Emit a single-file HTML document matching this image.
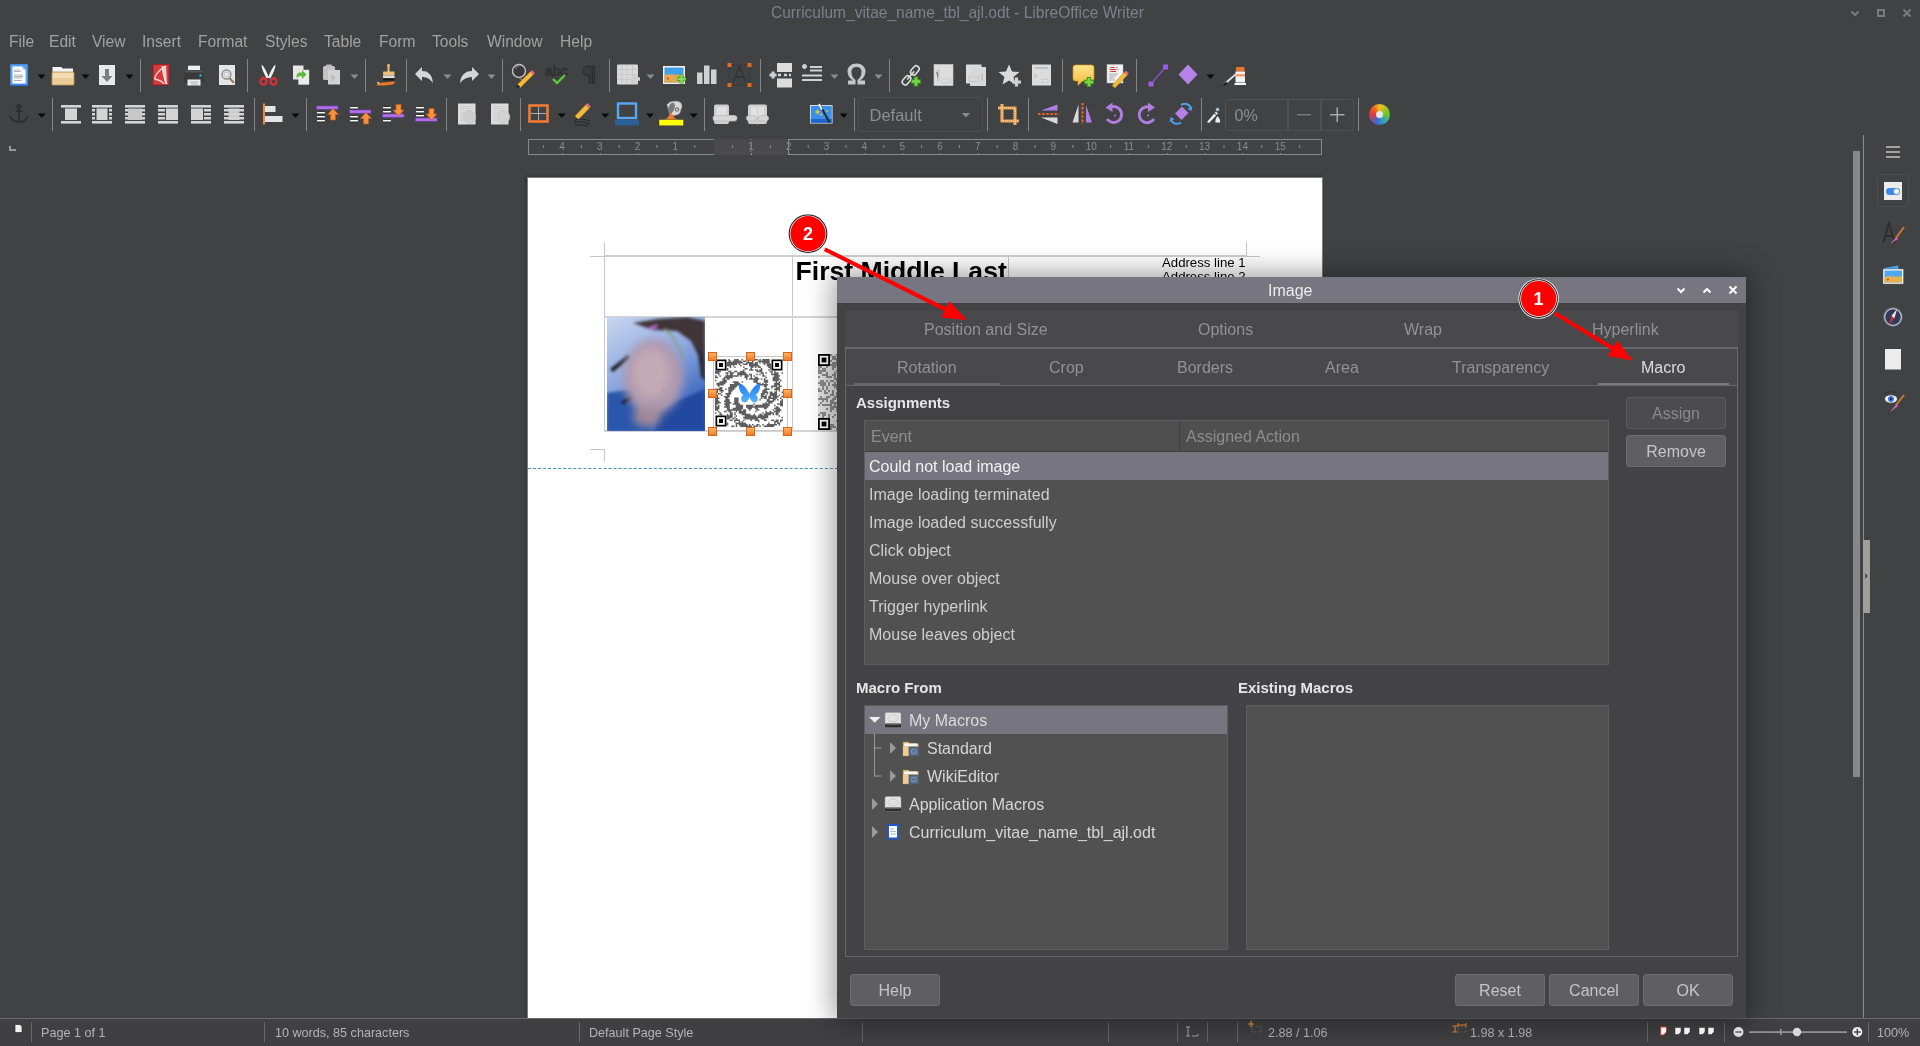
<!DOCTYPE html>
<html><head><meta charset="utf-8">
<style>
*{margin:0;padding:0;box-sizing:border-box}
html,body{width:1920px;height:1046px;overflow:hidden;background:#414244;font-family:"Liberation Sans",sans-serif;position:relative}
.a{position:absolute}
.t{position:absolute;white-space:nowrap;line-height:1}
.menu{color:#a3a2a0;font-size:15.6px;top:34px}
.sep{position:absolute;width:1px;background:#6b6b6d}
.dd{position:absolute;width:0;height:0;border-left:5px solid transparent;border-right:5px solid transparent;border-top:5px solid #111}
.dd.g{border-top-color:#8a8a8a}
.sb{position:absolute;top:1022px;height:20px;width:1px;background:#68686a}
.st{position:absolute;top:1027px;font-size:12.6px;color:#b4b4b4;white-space:nowrap;line-height:1}
.tab{position:absolute;font-size:16px;color:#929292;white-space:nowrap;line-height:1}
.row{position:absolute;left:869px;font-size:16px;color:#cecece;white-space:nowrap;line-height:1}
.btn{position:absolute;background:#5f5f61;border:1px solid #6d6d6f;border-radius:3px;color:#c6c6c6;font-size:16px;text-align:center;line-height:32px}
.lbl{position:absolute;font-size:15px;font-weight:bold;color:#e6e6e6;white-space:nowrap;line-height:1}
</style></head>
<body><div id="root" style="position:absolute;left:0;top:0;width:1920px;height:1046px;will-change:transform">
<!-- title -->
<div class="t" style="left:771px;top:4.5px;font-size:16.6px;color:#7d8087;transform:scaleX(0.935);transform-origin:0 0">Curriculum_vitae_name_tbl_ajl.odt - LibreOffice Writer</div>
<!-- menu -->
<div class="t menu" style="left:9px">File</div>
<div class="t menu" style="left:49px">Edit</div>
<div class="t menu" style="left:92px">View</div>
<div class="t menu" style="left:142px">Insert</div>
<div class="t menu" style="left:198px">Format</div>
<div class="t menu" style="left:265px">Styles</div>
<div class="t menu" style="left:324px">Table</div>
<div class="t menu" style="left:379px">Form</div>
<div class="t menu" style="left:432px">Tools</div>
<div class="t menu" style="left:487px">Window</div>
<div class="t menu" style="left:560px">Help</div>

<!-- toolbar --><svg class="a" style="left:0;top:0" width="1400" height="136"><rect x="10" y="64" width="18" height="22" fill="#2f6fd0"/><rect x="10.5" y="64.5" width="17" height="20" fill="#5aa2f0"/><path d="M12.5 66.5h9.5l3.5 3.5v13.5h-13z" fill="#fff"/><path d="M22 66.5v3.5h3.5" fill="#cfe0f5"/><path d="M14 70h6M14 71.5h7M14 75h9M14 76.5h9M14 78h8M14 80.5h8" stroke="#9aa0a8" stroke-width="0.8"/><path d="M37.5 74.5h8l-4 4.5z" fill="#0a0a0a"/><path d="M52.5 67h9l1 1.5h10.5v5h-20.5z" fill="#f4f4f4"/><rect x="52" y="72" width="22" height="13" rx="1" fill="#e9cc98" stroke="#c09a58" stroke-width="0.8"/><rect x="53" y="73" width="20" height="5" fill="#f3ddb2"/><path d="M81.5 74.5h8l-4 4.5z" fill="#0a0a0a"/><rect x="99" y="65" width="16" height="20" fill="#e9e9e9"/><path d="M105 69h4v7h3.5l-5.5 6l-5.5-6h3.5z" fill="#7a7d84"/><path d="M125.5 74.5h8l-4 4.5z" fill="#0a0a0a"/><rect x="140" y="59" width="1" height="33" fill="#858585"/><rect x="153" y="64.5" width="16" height="20.5" fill="#d73a3b" stroke="#9e1e1e" stroke-width="0.8"/><path d="M166 66 C158 70 155 76 154.5 79 M162 66 C163 74 164 80 167 84 M154.5 79 C159 80 163 82 164 84" stroke="#f6d6d6" stroke-width="1.3" fill="none"/><path d="M162.5 66.5l3.5 0l1 17.5l-2 0z" fill="#f2f2f2" opacity="0.8"/><rect x="188" y="65.7" width="12" height="6" fill="#f0f0f0"/><rect x="184" y="70" width="20" height="12.5" rx="2" fill="#3a3a3a"/><rect x="185" y="70.5" width="18" height="2" fill="#555"/><rect x="199.5" y="74.5" width="2" height="2" fill="#22c8f0"/><rect x="187.5" y="79.5" width="13" height="6" fill="#eeeeee"/><path d="M189.5 82h9M191 84h7" stroke="#999" stroke-width="0.7"/><rect x="219" y="65" width="16" height="20" fill="#e6e6e6"/><circle cx="226.5" cy="74.5" r="4.5" fill="none" stroke="#8d8d8d" stroke-width="1.3"/><circle cx="226.5" cy="74.5" r="2.6" fill="none" stroke="#b0b0b0" stroke-width="0.7"/><path d="M229.5 78l4.5 5" stroke="#9c7c5c" stroke-width="2"/><rect x="247" y="59" width="1" height="33" fill="#858585"/><path d="M261.5 64.5 C263.5 66 266 70 268.8 77.5 L266.8 78.5 C263.5 73 261.5 68 261.5 64.5Z" fill="#f2f2f2"/><path d="M275.5 64.5 C273.5 66 271 70 268.2 77.5 L270.2 78.5 C273.5 73 275.5 68 275.5 64.5Z" fill="#f2f2f2"/><path d="M260.5 81.5 a3 3.2 0 1 0 6 0 a3 3.2 0 1 0 -6 0z M270.5 81.5 a3 3.2 0 1 0 6 0 a3 3.2 0 1 0 -6 0z" fill="none" stroke="#d8303a" stroke-width="2.4"/><rect x="293" y="65.5" width="10.5" height="14" fill="#e8e8e8"/><rect x="298.5" y="70" width="10.5" height="14.5" fill="#ececec" stroke="#d0d0d0" stroke-width="0.5"/><path d="M296.5 78 C296 73 299 72 302 72.5 v-2.5 l4.5 4.5 l-4.5 4.5 v-2.5 C300 76 298 76 296.5 78z" fill="#5cba3a"/><rect x="323" y="66" width="12" height="14" rx="1.5" fill="#c4c4c4"/><rect x="326" y="64.5" width="6" height="3" rx="1" fill="#bdbdbd"/><rect x="328" y="70" width="12" height="14.5" fill="#d2d2d2"/><path d="M331 74 l5 4 l-5 4z" fill="#c0c0c0"/><path d="M350.5 74.5h8l-4 4.5z" fill="#8c8c8c"/><rect x="365" y="59" width="1" height="33" fill="#858585"/><rect x="387.5" y="65" width="2" height="7" fill="#e8c078"/><circle cx="388.5" cy="65.5" r="1.4" fill="#e8c078"/><rect x="383" y="71.5" width="11.5" height="4" rx="1" fill="#e8c078"/><rect x="383" y="75.5" width="11.5" height="2.5" fill="#dedede"/><rect x="383" y="78.5" width="11.5" height="2" fill="#1a1a1a"/><path d="M376 85 C380 82 386 82.5 395 81.5 L394 84 C388 85.5 380 86 376 85z" fill="#f07820"/><rect x="377.5" y="82" width="1.6" height="1.6" fill="#fff"/><rect x="406" y="59" width="1" height="33" fill="#858585"/><path d="M415 74 L422 67 V71 C428 71 432 74 433 83 C430 79 427 77 422 77 V81 Z" fill="#d6d6d6"/><path d="M443.5 74.5h8l-4 4.5z" fill="#8c8c8c"/><path d="M479 74 L472 67 V71 C466 71 461 74 460 83 C463 79 467 77 472 77 V81 Z" fill="#d6d6d6"/><path d="M487.5 74.5h8l-4 4.5z" fill="#8c8c8c"/><rect x="502" y="59" width="1" height="33" fill="#858585"/><circle cx="519" cy="71" r="6.5" fill="#3a3a3c" stroke="#c4c4c4" stroke-width="1.4"/><path d="M515.5 69 a4 4 0 0 1 4-3" stroke="#6a6a6a" stroke-width="1.2" fill="none"/><path d="M525 83 L520.5 78.5" stroke="#8c6a4c" stroke-width="2.4"/><path d="M517.5 84.5 L530.5 71.5 L533.5 74.5 L520.5 87.5 Z" fill="#f2b93a" stroke="#b07a20" stroke-width="0.6"/><path d="M530.5 71.5 L532 70 L535 73 L533.5 74.5Z" fill="#e8608a"/><path d="M517.5 84.5 L516 88 L520 86.5Z" fill="#222"/><text x="545" y="76" font-family="Liberation Sans" font-size="14" font-weight="bold" fill="#383838" stroke="#2a2a2a" stroke-width="0.4" letter-spacing="-0.5">abc</text><path d="M553 79 L557 83 L565 75" stroke="#5cc83a" stroke-width="2.4" fill="none"/><path d="M589 66 H594.5 V83.5 H592.5 V68 H591 V83.5 H589 V76 C585 76 583 74 583 71 C583 68 585 66 589 66Z" fill="#3a3a3a" stroke="#222" stroke-width="0.6"/><rect x="609" y="59" width="1" height="33" fill="#858585"/><rect x="617" y="64.5" width="21" height="20" rx="1" fill="#d9d9d9"/><path d="M622 64.5v20M627 64.5v20M632.5 64.5v20M617 69.5h21M617 74.5h21M617 79.5h21" stroke="#c2c2c2" stroke-width="0.7"/><path d="M630 79h10M635 74v10" stroke="#cfcfcf" stroke-width="3.5"/><path d="M646.5 74.5h8l-4 4.5z" fill="#8c8c8c"/><rect x="663" y="66" width="22" height="18" fill="#f2f2f2"/><rect x="664.5" y="67.5" width="19" height="15" fill="#3ea0e8"/><path d="M664.5 75 C670 73 676 76 683.5 74 V82.5 H664.5Z" fill="#e4a850"/><path d="M668 77l1 1.5l-1 1.5l-1-1.5z" fill="#e83020"/><path d="M677 79h9M681.5 74.5v9" stroke="#4caa2a" stroke-width="4"/><path d="M677.5 79h8M681.5 75v8" stroke="#8ad860" stroke-width="2.2"/><rect x="697" y="72.5" width="5.5" height="11.5" fill="#d0d0d0"/><rect x="704" y="65.5" width="5.5" height="18.5" fill="#d0d0d0"/><rect x="711" y="69.5" width="5.5" height="14.5" fill="#d0d0d0"/><rect x="729.5" y="65" width="20" height="20" fill="none" stroke="#2a2a2a" stroke-width="0.6" stroke-dasharray="1.5 1.5"/><path d="M733 82 L739.5 67 L746 82 M735 77 H744" stroke="#333" stroke-width="1.6" fill="none"/><rect x="727.5" y="63" width="4" height="4" fill="#e06a20"/><rect x="747.5" y="63" width="4" height="4" fill="#e06a20"/><rect x="727.5" y="83" width="4" height="4" fill="#e06a20"/><rect x="747.5" y="83" width="4" height="4" fill="#e06a20"/><rect x="760" y="59" width="1" height="33" fill="#858585"/><rect x="777" y="63" width="15" height="9" fill="#dcdcdc"/><rect x="777" y="78.5" width="15" height="9" fill="#dcdcdc"/><path d="M778 75h3M784 75h3M789 75h2" stroke="#d4d4d4" stroke-width="2.5"/><path d="M769.5 75h7M773 71.5v7" stroke="#d0d0d0" stroke-width="3"/><path d="M802 66.5h5M804.5 64v5" stroke="#d0d0d0" stroke-width="2.5"/><path d="M810 67h12M810 70.5h12M802 75.5h20M802 80h20" stroke="#d0d0d0" stroke-width="2.2"/><path d="M830.5 74.5h8l-4 4.5z" fill="#8c8c8c"/><path d="M848 84.5 V80.5 H853 C849.5 78.5 847.5 75 847.5 71.5 C847.5 66.5 851.5 63.5 856.5 63.5 C861.5 63.5 865.5 66.5 865.5 71.5 C865.5 75 863.5 78.5 860 80.5 H865 V84.5 H857.5 V80 C860 78.5 861.5 75.5 861.5 72 C861.5 68.5 859.5 67 856.5 67 C853.5 67 851.5 68.5 851.5 72 C851.5 75.5 853 78.5 855.5 80 V84.5Z" fill="#c6c6c6"/><path d="M874.5 74.5h8l-4 4.5z" fill="#8c8c8c"/><rect x="889" y="59" width="1" height="33" fill="#858585"/><g transform="rotate(-50 911 75)"><rect x="899" y="72" width="10" height="6" rx="3" fill="none" stroke="#dcdcdc" stroke-width="1.6"/><rect x="912" y="72" width="10" height="6" rx="3" fill="none" stroke="#dcdcdc" stroke-width="1.6"/><path d="M905 75h11" stroke="#dcdcdc" stroke-width="1.6"/></g><path d="M911 81.5h10M916 76.5v10" stroke="#3c9a20" stroke-width="4.5"/><path d="M912 81.5h8M916 77.5v8" stroke="#7ad648" stroke-width="2.5"/><rect x="934" y="64.5" width="19" height="21" fill="#dcdcdc" stroke="#cfcfcf" stroke-width="0.6"/><path d="M936.5 72l2-1.5v11" stroke="#c6c6c6" stroke-width="2"/><rect x="942" y="79" width="9" height="4" fill="none" stroke="#c6c6c6" stroke-width="0.8"/><rect x="966" y="64.5" width="15.5" height="19" fill="#dcdcdc"/><rect x="970" y="67" width="16" height="19" fill="#d8d8d8"/><rect x="969" y="77" width="10" height="4.5" fill="none" stroke="#c4c4c4" stroke-width="0.8"/><rect x="981" y="74" width="2" height="7" fill="#c4c4c4"/><path d="M1009 64.5 L1012 71.5 L1019.5 72 L1013.5 77 L1015.5 84.5 L1009 80.5 L1002.5 84.5 L1004.5 77 L998.5 72 L1006 71.5Z" fill="#dadada"/><path d="M1012 82h9M1016.5 77.5v9" stroke="#d2d2d2" stroke-width="3.2"/><rect x="1032" y="64.5" width="19" height="21" fill="#dcdcdc"/><rect x="1035" y="67" width="13" height="1.8" fill="#bdbdbd"/><rect x="1042" y="79.5" width="6" height="3" fill="none" stroke="#c4c4c4" stroke-width="0.7"/><path d="M1034 73l4 3l-4 3" fill="#c8c8c8"/><rect x="1062" y="59" width="1" height="33" fill="#858585"/><defs><linearGradient id="cmg" x1="0" y1="0" x2="0" y2="1"><stop offset="0" stop-color="#fde48a"/><stop offset="1" stop-color="#f2bc3a"/></linearGradient></defs><path d="M1073 67.5 a2.5 2.5 0 0 1 2.5-2.5 h16 a2.5 2.5 0 0 1 2.5 2.5 v11 a2.5 2.5 0 0 1 -2.5 2.5 h-9 l-4.5 4.5 v-4.5 h-2.5 a2.5 2.5 0 0 1 -2.5-2.5z" fill="url(#cmg)" stroke="#d8901c" stroke-width="0.7"/><path d="M1084 82h10M1089 77v10" stroke="#3c9a20" stroke-width="4.5"/><path d="M1085 82h8M1089 78v8" stroke="#7ad648" stroke-width="2.5"/><rect x="1107" y="64.5" width="16" height="18.5" fill="#f2f2f2" stroke="#bbb" stroke-width="0.5"/><path d="M1109 67.5h9M1109 69.5h10M1109 71.5h7M1109 74h9M1109 76h7M1109 78h5M1109 80h6" stroke="#9a9a9a" stroke-width="0.8"/><path d="M1111 67.5h3M1110 69.5h4M1114 69.5h1.5M1111 71.5h5" stroke="#d82828" stroke-width="1"/><path d="M1112 85.5 L1124.5 72 L1127.5 75 L1115 88Z" fill="#f2b93a" stroke="#b07a20" stroke-width="0.5"/><path d="M1124.5 72 L1126 70.5 L1129 73.5 L1127.5 75Z" fill="#e8608a"/><rect x="1136" y="59" width="1" height="33" fill="#858585"/><path d="M1151 84 L1165.5 67" stroke="#8a4ed0" stroke-width="1.3"/><rect x="1148.5" y="81.5" width="5" height="5" fill="#9a5ee0"/><rect x="1163" y="64.5" width="5" height="5" fill="#9a5ee0"/><path d="M1188 64.5 L1197.5 74.5 L1188 84.5 L1178.5 74.5Z" fill="#b684e8"/><path d="M1206.5 74.5h8l-4 4.5z" fill="#0a0a0a"/><rect x="1236" y="67" width="8.5" height="4.5" rx="1" fill="#e87830"/><rect x="1235.5" y="71.5" width="9.5" height="11" fill="#f2f2f2"/><rect x="1235.5" y="74" width="9.5" height="2.5" fill="#f0a070"/><rect x="1234.5" y="83" width="11.5" height="2" fill="#f8f8f8"/><path d="M1224 84.5 L1236 74" stroke="#ddd" stroke-width="1.8"/><path d="M1223.5 85 L1227 82.5" stroke="#111" stroke-width="2"/><g stroke="#2e2e2e" stroke-width="1.8" fill="none"><circle cx="19" cy="106.5" r="1.6"/><path d="M19 108v14M15.5 111h7M10 116 C12 121 16 122 19 122 C22 122 26 121 28 116"/></g><path d="M37.7 113.5h8l-4 4.5z" fill="#0a0a0a"/><rect x="52" y="98" width="1" height="33" fill="#858585"/><g fill="#d4d4d4"><rect x="61" y="105" width="20" height="2.6"/><rect x="61" y="121" width="20" height="2.6"/><rect x="65" y="108.5" width="12" height="11.5"/></g><g fill="#d4d4d4"><rect x="92" y="105" width="20" height="2.6"/><rect x="92" y="121" width="20" height="2.6"/><rect x="96.5" y="108.5" width="11" height="11.5"/><rect x="92" y="109" width="3" height="2.5"/><rect x="109" y="109" width="3" height="2.5"/><rect x="92" y="113" width="3" height="2.5"/><rect x="109" y="113" width="3" height="2.5"/><rect x="92" y="117" width="3" height="2.5"/><rect x="109" y="117" width="3" height="2.5"/></g><g fill="#d4d4d4"><rect x="125" y="105" width="20" height="2.6"/><rect x="125" y="121" width="20" height="2.6"/><rect x="128" y="108.5" width="14" height="11.5" fill="#c8c8c8"/><rect x="125" y="109" width="3" height="2.5"/><rect x="142" y="109" width="3" height="2.5"/><rect x="125" y="113" width="3" height="2.5"/><rect x="142" y="113" width="3" height="2.5"/><rect x="125" y="117" width="3" height="2.5"/><rect x="142" y="117" width="3" height="2.5"/></g><g fill="#d4d4d4"><rect x="158" y="105" width="20" height="2.6"/><rect x="158" y="121" width="20" height="2.6"/><rect x="166" y="108.5" width="12" height="11.5"/><rect x="158" y="109" width="7" height="2.5"/><rect x="158" y="113" width="7" height="2.5"/><rect x="158" y="117" width="7" height="2.5"/></g><g fill="#d4d4d4"><rect x="191" y="105" width="20" height="2.6"/><rect x="191" y="121" width="20" height="2.6"/><rect x="191" y="108.5" width="12" height="11.5"/><rect x="204" y="109" width="7" height="2.5"/><rect x="204" y="113" width="7" height="2.5"/><rect x="204" y="117" width="7" height="2.5"/></g><g fill="#d4d4d4"><rect x="224" y="105" width="20" height="2.6"/><rect x="224" y="121" width="20" height="2.6"/><rect x="228.5" y="108.5" width="11" height="11.5" fill="#c8c8c8"/><rect x="224" y="109" width="20" height="2.5"/><rect x="224" y="113" width="20" height="2.5"/><rect x="224" y="117" width="20" height="2.5"/></g><rect x="254" y="98" width="1" height="33" fill="#858585"/><rect x="263" y="103.5" width="2" height="21" fill="#f08a3a"/><rect x="265" y="106" width="10.5" height="6" fill="#e4e4e4"/><rect x="265" y="116" width="17.5" height="6" fill="#e4e4e4"/><path d="M291.5 113.5h8l-4 4.5z" fill="#0a0a0a"/><rect x="306" y="98" width="1" height="33" fill="#858585"/><rect x="316.5" y="106" width="21.5" height="3.2" fill="#b070e8" stroke="#7a3cc0" stroke-width="0.6"/><rect x="316.5" y="111.5" width="9" height="2.4" rx="1.2" fill="#fff" stroke="#1a1a1a" stroke-width="0.8"/><rect x="316.5" y="115.5" width="9" height="2.4" rx="1.2" fill="#fff" stroke="#1a1a1a" stroke-width="0.8"/><rect x="316.5" y="119.5" width="9" height="2.4" rx="1.2" fill="#fff" stroke="#1a1a1a" stroke-width="0.8"/><path d="M333 108.5 l5.5 6 h-3 v5.5 h-5 v-5.5 h-3z" fill="#f59040" stroke="#d05a10" stroke-width="0.7"/><rect x="349.5" y="106.5" width="9" height="2.4" rx="1.2" fill="#fff" stroke="#1a1a1a" stroke-width="0.8"/><rect x="349.5" y="115.5" width="9" height="2.4" rx="1.2" fill="#fff" stroke="#1a1a1a" stroke-width="0.8"/><rect x="349.5" y="119.5" width="9" height="2.4" rx="1.2" fill="#fff" stroke="#1a1a1a" stroke-width="0.8"/><rect x="349.5" y="110" width="21.5" height="3.2" fill="#b070e8" stroke="#7a3cc0" stroke-width="0.6"/><path d="M366 112.5 l5.5 6 h-3 v5.5 h-5 v-5.5 h-3z" fill="#f59040" stroke="#d05a10" stroke-width="0.7"/><rect x="382.5" y="106.5" width="9" height="2.4" rx="1.2" fill="#fff" stroke="#1a1a1a" stroke-width="0.8"/><rect x="382.5" y="110.5" width="9" height="2.4" rx="1.2" fill="#fff" stroke="#1a1a1a" stroke-width="0.8"/><rect x="382.5" y="119.5" width="9" height="2.4" rx="1.2" fill="#fff" stroke="#1a1a1a" stroke-width="0.8"/><rect x="382.5" y="114" width="21.5" height="3.2" fill="#b070e8" stroke="#7a3cc0" stroke-width="0.6"/><path d="M398.5 116 l5.5 -6 h-3 v-5.5 h-5 v5.5 h-3z" fill="#f59040" stroke="#d05a10" stroke-width="0.7"/><rect x="415.5" y="106.5" width="9" height="2.4" rx="1.2" fill="#fff" stroke="#1a1a1a" stroke-width="0.8"/><rect x="415.5" y="110.5" width="9" height="2.4" rx="1.2" fill="#fff" stroke="#1a1a1a" stroke-width="0.8"/><rect x="415.5" y="114.5" width="9" height="2.4" rx="1.2" fill="#fff" stroke="#1a1a1a" stroke-width="0.8"/><rect x="415.5" y="118" width="21.5" height="3.2" fill="#b070e8" stroke="#7a3cc0" stroke-width="0.6"/><path d="M431.5 120 l5.5 -6 h-3 v-5.5 h-5 v5.5 h-3z" fill="#f59040" stroke="#d05a10" stroke-width="0.7"/><rect x="446" y="98" width="1" height="33" fill="#858585"/><rect x="458" y="103.5" width="17.5" height="21" fill="#dcdcdc"/><path d="M460 106.5h13M460 108.5h13M460 110.5h13M460 112.5h13M460 114.5h13M460 116.5h13M460 118.5h13M460 120.5h13" stroke="#c8c8c8" stroke-width="0.6"/><circle cx="469.5" cy="117" r="6.3" fill="#cdcdcd" stroke="#c0c0c0" stroke-width="0.5"/><rect x="491" y="103.5" width="17.5" height="21" fill="#dcdcdc"/><path d="M493 106.5h13M493 108.5h13M493 110.5h13M493 112.5h13M493 114.5h13M493 116.5h13M493 118.5h13M493 120.5h13" stroke="#c8c8c8" stroke-width="0.6"/><circle cx="503.5" cy="117" r="6.3" fill="#d2d2d2" stroke="#c4c4c4" stroke-width="0.5"/><rect x="520" y="98" width="1" height="33" fill="#858585"/><rect x="529.5" y="105.5" width="18" height="16" fill="none" stroke="#f07a30" stroke-width="2.6"/><path d="M538.5 107v13M531 113.5h15" stroke="#c4c4c4" stroke-width="0.8"/><path d="M557.7 113.5h8l-4 4.5z" fill="#0a0a0a"/><path d="M575 116 L586 104.5 L589.5 108 L578.5 119.5Z" fill="#f2b93a" stroke="#b07a20" stroke-width="0.5"/><path d="M586 104.5 L587.5 103 L591 106.5 L589.5 108Z" fill="#e8608a"/><path d="M574 120.5 C579 118 584 119 590 121 M574 123 C579 121 584 122 590 124 M575 125.5 C579 124.5 583 125 588 126" stroke="#1a1a1a" stroke-width="0.9" fill="none" opacity="0.8"/><path d="M601.3 113.5h8l-4 4.5z" fill="#0a0a0a"/><rect x="618" y="103.5" width="18" height="14.5" fill="none" stroke="#58a8f8" stroke-width="2.4"/><rect x="615" y="120" width="24" height="5.5" fill="#2a6098"/><path d="M646 113.5h8l-4 4.5z" fill="#0a0a0a"/><path d="M667 104.5 C668 102 674 100.5 678.5 101.5 C680.5 102 682 104 682 106.5 L680 112.5 C679 115 673 116.5 670 115 Z" fill="#d8d8d8" stroke="#9a9a9a" stroke-width="0.6"/><ellipse cx="671.5" cy="108" rx="3" ry="5.5" transform="rotate(20 671.5 108)" fill="#7a7a7a"/><circle cx="677" cy="109.5" r="1.7" fill="none" stroke="#333" stroke-width="0.8"/><path d="M668 104 C667 100 670 98.5 673 100" stroke="#444" stroke-width="0.9" fill="none"/><path d="M670 113 C669.5 116 668 118 664 119.8 H678 C675 118.5 672.5 116.5 671.8 113Z" fill="#f07a30"/><rect x="659" y="119.5" width="24.5" height="6.3" fill="#ffff00" stroke="#303050" stroke-width="0.4"/><path d="M689.7 113.5h8l-4 4.5z" fill="#0a0a0a"/><rect x="704" y="98" width="1" height="33" fill="#858585"/><rect x="714" y="104.5" width="15" height="19.5" rx="2" fill="#cfcfcf"/><rect x="716.5" y="107" width="10" height="10" fill="#e0e0e0"/><rect x="713" y="115.5" width="24" height="5.5" rx="2.7" fill="#d6d6d6" stroke="#bbb" stroke-width="0.8"/><rect x="748" y="104.5" width="19" height="19.5" rx="2" fill="#cfcfcf"/><rect x="751" y="107" width="13" height="10" fill="#e0e0e0"/><rect x="746.5" y="115.5" width="10" height="5.5" rx="2.7" fill="#d6d6d6" stroke="#bbb" stroke-width="0.8"/><rect x="758.5" y="115.5" width="10" height="5.5" rx="2.7" fill="#d6d6d6" stroke="#bbb" stroke-width="0.8"/><path d="M757.5 108v17" stroke="#bbb" stroke-width="0.6"/><rect x="810" y="105" width="22.5" height="18.5" fill="#f0f0f0"/><rect x="810.8" y="105.8" width="21" height="17" fill="#3a90e8"/><rect x="810.8" y="119" width="21" height="3.8" fill="#1f66c8"/><path d="M819.5 104 L829.5 122.5" stroke="#222" stroke-width="1.8"/><path d="M819 104 L822 109.5" stroke="#fff" stroke-width="1.8"/><path d="M817.5 109l1 2l2 1l-2 1l-1 2l-1-2l-2-1l2-1z" fill="#f0c030"/><circle cx="821" cy="114.5" r="1.1" fill="#f0c030"/><circle cx="827" cy="111" r="0.9" fill="#f0c030"/><path d="M839.7 113.5h8l-4 4.5z" fill="#0a0a0a"/><rect x="854" y="98" width="1" height="33" fill="#858585"/><rect x="858.5" y="97.5" width="124" height="34" rx="2" fill="none" stroke="#4e4e50" stroke-width="1"/><text x="869.5" y="121" font-family="Liberation Sans" font-size="16.5" fill="#8e8e8e">Default</text><path d="M962 113h8l-4 4.5z" fill="#8c8c8c"/><rect x="987" y="98" width="1" height="33" fill="#858585"/><path d="M1002 104v17h17 M998 108h17v17" stroke="#e8a050" stroke-width="3.2" fill="none"/><path d="M1002 104v17h17 M998 108h17v17" stroke="#fbe8c8" stroke-width="1" fill="none" stroke-dasharray="1 1"/><rect x="1028" y="98" width="1" height="33" fill="#858585"/><path d="M1057.5 104.5 V110.5 H1041Z" fill="#b07ee8"/><path d="M1057.5 124 V117.5 H1041Z" fill="#dadada"/><path d="M1038 114h21" stroke="#e86420" stroke-width="2.2" stroke-dasharray="2.5 1.6"/><path d="M1078.5 104.5 V122.5 H1072.5Z" fill="#dadada"/><path d="M1086 105 V122.5 H1092Z" fill="#b07ee8"/><path d="M1082.5 103v21" stroke="#e86420" stroke-width="2.2" stroke-dasharray="2.5 1.6"/><path d="M1109 108 A8 8 0 1 1 1107 119" stroke="#b07ee0" stroke-width="3" fill="none"/><path d="M1105.5 107.5 L1112.5 102.5 L1112.5 112Z" fill="#b07ee0"/><circle cx="1115" cy="115.5" r="1" fill="#b07ee0"/><path d="M1151.5 108 A8 8 0 1 0 1154 119" stroke="#b07ee0" stroke-width="3" fill="none"/><path d="M1155 107.5 L1148 102.5 L1148 112Z" fill="#b07ee0"/><circle cx="1148" cy="115.5" r="1" fill="#b07ee0"/><path d="M1175 113.5 L1182 106.5 L1188.5 113 L1181.5 120Z" fill="#b480e8"/><path d="M1181 105 C1185 102.5 1189 104 1191 108" stroke="#4aa0f0" stroke-width="2" fill="none"/><path d="M1192.5 106 l-1 5 l-4-2z" fill="#4aa0f0"/><path d="M1181 122.5 C1177 125 1173 124 1171 120" stroke="#4aa0f0" stroke-width="2" fill="none"/><path d="M1169.5 122 l1-5 l4 2z" fill="#4aa0f0"/><rect x="1201" y="98" width="1" height="33" fill="#858585"/><path d="M1207 122 L1216 111.5 L1218 113.5 L1209 123Z" fill="#eee"/><circle cx="1217.5" cy="109.5" r="1.8" fill="#a8c0d8"/><path d="M1214.5 113l3 3.5" stroke="#333" stroke-width="1"/><path d="M1217.5 116 C1215.5 119 1215 121 1215.5 122.5 H1220 C1220.5 121 1220 119 1217.5 116Z" fill="#eee"/><rect x="1225.5" y="99.5" width="128" height="31" rx="2" fill="none" stroke="#505052" stroke-width="1"/><rect x="1287.5" y="100" width="1" height="30" fill="#5e5e60"/><rect x="1320.5" y="100" width="1" height="30" fill="#5e5e60"/><text x="1234.5" y="121" font-family="Liberation Sans" font-size="16" fill="#8e8e8e">0%</text><rect x="1297" y="114" width="14" height="1.4" fill="#7a7a7a"/><path d="M1330 114.7h14.5M1337.2 107.5v14.5" stroke="#a8a8a8" stroke-width="1.5"/><rect x="1358" y="98" width="1" height="33" fill="#858585"/></svg><div class="a" style="left:1368.5px;top:103.5px;width:21px;height:21px;border-radius:50%;background:conic-gradient(from 0deg,#f0c020,#60c830 25%,#30a0c0 42%,#3a6ad8 55%,#d83a40 75%,#f06020 88%,#f0c020)"></div><div class="a" style="left:1375.5px;top:110.5px;width:7px;height:7px;border-radius:50%;background:#e6e6e6"></div><!-- /toolbar -->
<!-- ruler -->
<div class="a" style="left:528px;top:139px;width:186px;height:16px;border:1px solid #8a8a8a;border-right:none"></div>
<div class="a" style="left:714px;top:139px;width:74px;height:16px;background:#4a4a4c"></div>
<div class="a" style="left:788px;top:139px;width:534px;height:16px;border:1px solid #8a8a8a;border-left:1px solid #8a8a8a"></div>
<div class="a" style="left:9px;top:146px;width:7px;height:5px;border-left:2px solid #9a9a9a;border-bottom:2px solid #9a9a9a"></div>

<!-- page -->
<div class="a" style="left:527px;top:177px;width:796px;height:860px;background:#fff;border:1px solid #7e7e7e;border-bottom:none;box-shadow:-1px -1px 3px rgba(0,0,0,0.25)"></div>


<!-- document content -->
<div class="a" style="left:590px;top:256px;width:14px;height:1px;background:#c6c6c6"></div>
<div class="a" style="left:604px;top:242px;width:1px;height:14px;background:#c6c6c6"></div>
<div class="a" style="left:1246px;top:242px;width:1px;height:14px;background:#c6c6c6"></div>
<div class="a" style="left:1246px;top:256px;width:14px;height:1px;background:#c6c6c6"></div>
<div class="a" style="left:604px;top:255px;width:642px;height:2px;background:#cfcfcf"></div>
<div class="a" style="left:604px;top:256px;width:1px;height:176px;background:#c8c8c8"></div>
<div class="a" style="left:792px;top:256px;width:1px;height:176px;background:#c8c8c8"></div>
<div class="a" style="left:1008px;top:256px;width:1px;height:40px;background:#c8c8c8"></div>
<div class="a" style="left:604px;top:316px;width:300px;height:2px;background:#d4d4d4"></div>
<div class="a" style="left:604px;top:430px;width:300px;height:2px;background:#d4d4d4"></div>
<div class="a" style="left:590px;top:449px;width:14px;height:1px;background:#c6c6c6"></div>
<div class="a" style="left:604px;top:449px;width:1px;height:13px;background:#c6c6c6"></div>
<div class="a" style="left:528px;top:468px;width:320px;height:0;border-top:1px dashed #3b8fd0"></div>
<div class="t" style="left:795.5px;top:257.5px;font-size:26.6px;font-weight:bold;color:#000">First Middle Last</div>
<div class="t" style="left:1162px;top:256px;font-size:13.2px;color:#000">Address line 1</div>
<div class="t" style="left:1162px;top:270px;font-size:13.2px;color:#000">Address line 2</div>
<svg class="a" style="left:607px;top:317px" width="98" height="114" viewBox="0 0 98 114">
 <defs><filter id="bl" x="-30%" y="-30%" width="160%" height="160%"><feGaussianBlur stdDeviation="4"/></filter>
 <filter id="bl2" x="-20%" y="-20%" width="140%" height="140%"><feGaussianBlur stdDeviation="1.5"/></filter>
 <linearGradient id="pg" x1="0" y1="0" x2="0.5" y2="1"><stop offset="0" stop-color="#c8d6f0"/><stop offset="0.5" stop-color="#8eaae0"/><stop offset="1" stop-color="#3460b8"/></linearGradient></defs>
 <rect width="98" height="114" fill="url(#pg)"/>
 <g filter="url(#bl2)">
 <path d="M0 76 L38 70 L44 114 L0 114Z" fill="#2c56ac"/>
 <path d="M52 92 L98 72 L98 114 L48 114Z" fill="#2048a0"/>
 <path d="M26 6 L50 2 L80 0 L98 4 L98 44 L90 36 L84 24 L70 14 L46 13Z" fill="#403638"/><path d="M90 30 L98 40 L98 64 L94 60Z" fill="#2a2a34"/>
 <path d="M3 52 L21 38 L23 41 L6 55Z" fill="#15151e"/>
 <path d="M14 84 L30 74 L32 78 L16 88Z" fill="#15151e"/>
 <path d="M58 12 C66 18 72 28 76 42" stroke="#8a9a70" stroke-width="1.6" fill="none"/>
 <path d="M42 12 L50 9" stroke="#c070d0" stroke-width="2.5"/>
 </g>
 <g filter="url(#bl)">
 <ellipse cx="46" cy="60" rx="30" ry="38" fill="#b09aae"/>
 <ellipse cx="44" cy="56" rx="18" ry="24" fill="#c4aab6"/>
 <ellipse cx="40" cy="100" rx="14" ry="10" fill="#a08898"/>
 </g>
</svg>
<div class="a" style="left:713px;top:356px;width:75px;height:75px;border:1px solid #c8c8c8"></div>
<svg class="a" style="left:715px;top:359px" width="68" height="68" viewBox="0 0 68 68">
 <defs><filter id="qb" x="0" y="0" width="100%" height="100%"><feGaussianBlur stdDeviation="0.5"/></filter>
 <linearGradient id="bfg" x1="0" y1="0" x2="0" y2="1"><stop offset="0" stop-color="#1c7ef2"/><stop offset="1" stop-color="#5cb2ff"/></linearGradient></defs>
 <rect width="68" height="68" fill="#fff"/>
 <g filter="url(#qb)"><path d="M13.3 0.0h1.5v1.5h-1.5zM19.2 0.0h4.4v1.5h-4.4zM26.6 0.0h1.5v1.5h-1.5zM32.5 0.0h1.5v1.5h-1.5zM37.0 0.0h1.5v1.5h-1.5zM39.9 0.0h3.0v1.5h-3.0zM44.3 0.0h1.5v1.5h-1.5zM47.3 0.0h7.4v1.5h-7.4zM13.3 1.5h3.0v1.5h-3.0zM17.7 1.5h8.9v1.5h-8.9zM28.1 1.5h3.0v1.5h-3.0zM32.5 1.5h1.5v1.5h-1.5zM37.0 1.5h1.5v1.5h-1.5zM42.9 1.5h11.8v1.5h-11.8zM11.8 3.0h16.3v1.5h-16.3zM31.0 3.0h7.4v1.5h-7.4zM39.9 3.0h3.0v1.5h-3.0zM44.3 3.0h1.5v1.5h-1.5zM47.3 3.0h7.4v1.5h-7.4zM11.8 4.4h10.3v1.5h-10.3zM23.7 4.4h1.5v1.5h-1.5zM28.1 4.4h4.4v1.5h-4.4zM34.0 4.4h8.9v1.5h-8.9zM48.8 4.4h1.5v1.5h-1.5zM51.7 4.4h4.4v1.5h-4.4zM11.8 5.9h4.4v1.5h-4.4zM17.7 5.9h1.5v1.5h-1.5zM25.1 5.9h1.5v1.5h-1.5zM34.0 5.9h10.3v1.5h-10.3zM51.7 5.9h4.4v1.5h-4.4zM14.8 7.4h1.5v1.5h-1.5zM19.2 7.4h1.5v1.5h-1.5zM28.1 7.4h1.5v1.5h-1.5zM35.5 7.4h3.0v1.5h-3.0zM39.9 7.4h1.5v1.5h-1.5zM42.9 7.4h3.0v1.5h-3.0zM53.2 7.4h3.0v1.5h-3.0zM11.8 8.9h1.5v1.5h-1.5zM29.6 8.9h3.0v1.5h-3.0zM35.5 8.9h1.5v1.5h-1.5zM45.8 8.9h1.5v1.5h-1.5zM54.7 8.9h1.5v1.5h-1.5zM11.8 10.3h1.5v1.5h-1.5zM28.1 10.3h1.5v1.5h-1.5zM34.0 10.3h4.4v1.5h-4.4zM39.9 10.3h3.0v1.5h-3.0zM44.3 10.3h3.0v1.5h-3.0zM53.2 10.3h1.5v1.5h-1.5zM0.0 11.8h5.9v1.5h-5.9zM13.3 11.8h3.0v1.5h-3.0zM19.2 11.8h3.0v1.5h-3.0zM25.1 11.8h4.4v1.5h-4.4zM41.4 11.8h5.9v1.5h-5.9zM54.7 11.8h3.0v1.5h-3.0zM59.1 11.8h1.5v1.5h-1.5zM0.0 13.3h4.4v1.5h-4.4zM10.3 13.3h3.0v1.5h-3.0zM14.8 13.3h4.4v1.5h-4.4zM22.2 13.3h8.9v1.5h-8.9zM45.8 13.3h3.0v1.5h-3.0zM50.3 13.3h1.5v1.5h-1.5zM56.2 13.3h1.5v1.5h-1.5zM59.1 13.3h4.4v1.5h-4.4zM66.5 13.3h1.5v1.5h-1.5zM3.0 14.8h1.5v1.5h-1.5zM11.8 14.8h1.5v1.5h-1.5zM14.8 14.8h3.0v1.5h-3.0zM22.2 14.8h10.3v1.5h-10.3zM34.0 14.8h3.0v1.5h-3.0zM41.4 14.8h1.5v1.5h-1.5zM44.3 14.8h1.5v1.5h-1.5zM47.3 14.8h1.5v1.5h-1.5zM56.2 14.8h7.4v1.5h-7.4zM0.0 16.3h1.5v1.5h-1.5zM4.4 16.3h1.5v1.5h-1.5zM10.3 16.3h13.3v1.5h-13.3zM25.1 16.3h1.5v1.5h-1.5zM29.6 16.3h4.4v1.5h-4.4zM35.5 16.3h1.5v1.5h-1.5zM38.4 16.3h1.5v1.5h-1.5zM47.3 16.3h3.0v1.5h-3.0zM59.1 16.3h5.9v1.5h-5.9zM0.0 17.7h3.0v1.5h-3.0zM8.9 17.7h8.9v1.5h-8.9zM29.6 17.7h3.0v1.5h-3.0zM35.5 17.7h1.5v1.5h-1.5zM39.9 17.7h3.0v1.5h-3.0zM50.3 17.7h1.5v1.5h-1.5zM57.7 17.7h5.9v1.5h-5.9zM7.4 19.2h3.0v1.5h-3.0zM11.8 19.2h3.0v1.5h-3.0zM31.0 19.2h1.5v1.5h-1.5zM34.0 19.2h10.3v1.5h-10.3zM45.8 19.2h1.5v1.5h-1.5zM48.8 19.2h1.5v1.5h-1.5zM57.7 19.2h7.4v1.5h-7.4zM0.0 20.7h1.5v1.5h-1.5zM7.4 20.7h4.4v1.5h-4.4zM38.4 20.7h4.4v1.5h-4.4zM48.8 20.7h4.4v1.5h-4.4zM57.7 20.7h5.9v1.5h-5.9zM65.0 20.7h1.5v1.5h-1.5zM4.4 22.2h7.4v1.5h-7.4zM17.7 22.2h5.9v1.5h-5.9zM26.6 22.2h1.5v1.5h-1.5zM38.4 22.2h4.4v1.5h-4.4zM48.8 22.2h4.4v1.5h-4.4zM60.6 22.2h1.5v1.5h-1.5zM63.6 22.2h1.5v1.5h-1.5zM1.5 23.7h8.9v1.5h-8.9zM19.2 23.7h5.9v1.5h-5.9zM41.4 23.7h4.4v1.5h-4.4zM47.3 23.7h1.5v1.5h-1.5zM50.3 23.7h1.5v1.5h-1.5zM59.1 23.7h5.9v1.5h-5.9zM1.5 25.1h7.4v1.5h-7.4zM14.8 25.1h10.3v1.5h-10.3zM44.3 25.1h8.9v1.5h-8.9zM59.1 25.1h5.9v1.5h-5.9zM3.0 26.6h1.5v1.5h-1.5zM14.8 26.6h7.4v1.5h-7.4zM48.8 26.6h3.0v1.5h-3.0zM56.2 26.6h5.9v1.5h-5.9zM63.6 26.6h3.0v1.5h-3.0zM4.4 28.1h3.0v1.5h-3.0zM13.3 28.1h7.4v1.5h-7.4zM50.3 28.1h1.5v1.5h-1.5zM56.2 28.1h1.5v1.5h-1.5zM60.6 28.1h4.4v1.5h-4.4zM0.0 29.6h7.4v1.5h-7.4zM10.3 29.6h1.5v1.5h-1.5zM13.3 29.6h5.9v1.5h-5.9zM48.8 29.6h5.9v1.5h-5.9zM59.1 29.6h5.9v1.5h-5.9zM0.0 31.0h3.0v1.5h-3.0zM4.4 31.0h4.4v1.5h-4.4zM13.3 31.0h4.4v1.5h-4.4zM47.3 31.0h4.4v1.5h-4.4zM60.6 31.0h1.5v1.5h-1.5zM63.6 31.0h1.5v1.5h-1.5zM0.0 32.5h3.0v1.5h-3.0zM5.9 32.5h1.5v1.5h-1.5zM13.3 32.5h3.0v1.5h-3.0zM47.3 32.5h5.9v1.5h-5.9zM54.7 32.5h3.0v1.5h-3.0zM59.1 32.5h3.0v1.5h-3.0zM66.5 32.5h1.5v1.5h-1.5zM0.0 34.0h1.5v1.5h-1.5zM3.0 34.0h3.0v1.5h-3.0zM10.3 34.0h5.9v1.5h-5.9zM45.8 34.0h4.4v1.5h-4.4zM51.7 34.0h1.5v1.5h-1.5zM54.7 34.0h7.4v1.5h-7.4zM0.0 35.5h3.0v1.5h-3.0zM5.9 35.5h1.5v1.5h-1.5zM11.8 35.5h3.0v1.5h-3.0zM45.8 35.5h3.0v1.5h-3.0zM50.3 35.5h1.5v1.5h-1.5zM54.7 35.5h7.4v1.5h-7.4zM63.6 35.5h1.5v1.5h-1.5zM0.0 37.0h3.0v1.5h-3.0zM8.9 37.0h5.9v1.5h-5.9zM45.8 37.0h5.9v1.5h-5.9zM53.2 37.0h3.0v1.5h-3.0zM57.7 37.0h5.9v1.5h-5.9zM66.5 37.0h1.5v1.5h-1.5zM0.0 38.4h4.4v1.5h-4.4zM10.3 38.4h3.0v1.5h-3.0zM19.2 38.4h4.4v1.5h-4.4zM45.8 38.4h1.5v1.5h-1.5zM48.8 38.4h3.0v1.5h-3.0zM53.2 38.4h8.9v1.5h-8.9zM65.0 38.4h1.5v1.5h-1.5zM0.0 39.9h3.0v1.5h-3.0zM10.3 39.9h4.4v1.5h-4.4zM19.2 39.9h4.4v1.5h-4.4zM44.3 39.9h1.5v1.5h-1.5zM51.7 39.9h3.0v1.5h-3.0zM57.7 39.9h3.0v1.5h-3.0zM62.1 39.9h1.5v1.5h-1.5zM66.5 39.9h1.5v1.5h-1.5zM0.0 41.4h4.4v1.5h-4.4zM8.9 41.4h5.9v1.5h-5.9zM19.2 41.4h4.4v1.5h-4.4zM51.7 41.4h7.4v1.5h-7.4zM65.0 41.4h3.0v1.5h-3.0zM0.0 42.9h5.9v1.5h-5.9zM10.3 42.9h5.9v1.5h-5.9zM19.2 42.9h4.4v1.5h-4.4zM50.3 42.9h1.5v1.5h-1.5zM53.2 42.9h4.4v1.5h-4.4zM65.0 42.9h3.0v1.5h-3.0zM0.0 44.3h3.0v1.5h-3.0zM8.9 44.3h5.9v1.5h-5.9zM17.7 44.3h7.4v1.5h-7.4zM38.4 44.3h1.5v1.5h-1.5zM47.3 44.3h7.4v1.5h-7.4zM62.1 44.3h5.9v1.5h-5.9zM0.0 45.8h1.5v1.5h-1.5zM3.0 45.8h1.5v1.5h-1.5zM10.3 45.8h4.4v1.5h-4.4zM20.7 45.8h7.4v1.5h-7.4zM31.0 45.8h7.4v1.5h-7.4zM39.9 45.8h14.8v1.5h-14.8zM59.1 45.8h1.5v1.5h-1.5zM65.0 45.8h3.0v1.5h-3.0zM0.0 47.3h4.4v1.5h-4.4zM8.9 47.3h5.9v1.5h-5.9zM20.7 47.3h7.4v1.5h-7.4zM31.0 47.3h22.2v1.5h-22.2zM60.6 47.3h3.0v1.5h-3.0zM0.0 48.8h4.4v1.5h-4.4zM11.8 48.8h3.0v1.5h-3.0zM17.7 48.8h10.3v1.5h-10.3zM32.5 48.8h4.4v1.5h-4.4zM39.9 48.8h3.0v1.5h-3.0zM48.8 48.8h3.0v1.5h-3.0zM59.1 48.8h5.9v1.5h-5.9zM0.0 50.3h3.0v1.5h-3.0zM11.8 50.3h14.8v1.5h-14.8zM28.1 50.3h3.0v1.5h-3.0zM34.0 50.3h1.5v1.5h-1.5zM41.4 50.3h3.0v1.5h-3.0zM57.7 50.3h1.5v1.5h-1.5zM60.6 50.3h5.9v1.5h-5.9zM3.0 51.7h1.5v1.5h-1.5zM8.9 51.7h3.0v1.5h-3.0zM13.3 51.7h3.0v1.5h-3.0zM20.7 51.7h1.5v1.5h-1.5zM23.7 51.7h7.4v1.5h-7.4zM39.9 51.7h1.5v1.5h-1.5zM50.3 51.7h1.5v1.5h-1.5zM54.7 51.7h1.5v1.5h-1.5zM59.1 51.7h5.9v1.5h-5.9zM0.0 53.2h1.5v1.5h-1.5zM4.4 53.2h1.5v1.5h-1.5zM14.8 53.2h3.0v1.5h-3.0zM19.2 53.2h1.5v1.5h-1.5zM23.7 53.2h7.4v1.5h-7.4zM47.3 53.2h1.5v1.5h-1.5zM50.3 53.2h8.9v1.5h-8.9zM60.6 53.2h3.0v1.5h-3.0zM4.4 54.7h3.0v1.5h-3.0zM11.8 54.7h1.5v1.5h-1.5zM14.8 54.7h3.0v1.5h-3.0zM19.2 54.7h1.5v1.5h-1.5zM26.6 54.7h8.9v1.5h-8.9zM38.4 54.7h1.5v1.5h-1.5zM44.3 54.7h3.0v1.5h-3.0zM48.8 54.7h7.4v1.5h-7.4zM57.7 54.7h1.5v1.5h-1.5zM60.6 54.7h3.0v1.5h-3.0zM11.8 56.2h5.9v1.5h-5.9zM20.7 56.2h1.5v1.5h-1.5zM29.6 56.2h11.8v1.5h-11.8zM42.9 56.2h10.3v1.5h-10.3zM63.6 56.2h1.5v1.5h-1.5zM11.8 57.7h5.9v1.5h-5.9zM19.2 57.7h1.5v1.5h-1.5zM28.1 57.7h25.1v1.5h-25.1zM66.5 57.7h1.5v1.5h-1.5zM11.8 59.1h3.0v1.5h-3.0zM17.7 59.1h1.5v1.5h-1.5zM20.7 59.1h1.5v1.5h-1.5zM29.6 59.1h13.3v1.5h-13.3zM45.8 59.1h4.4v1.5h-4.4zM14.8 60.6h3.0v1.5h-3.0zM19.2 60.6h5.9v1.5h-5.9zM28.1 60.6h1.5v1.5h-1.5zM35.5 60.6h1.5v1.5h-1.5zM39.9 60.6h4.4v1.5h-4.4zM48.8 60.6h3.0v1.5h-3.0zM56.2 60.6h3.0v1.5h-3.0zM60.6 60.6h3.0v1.5h-3.0zM65.0 60.6h3.0v1.5h-3.0zM19.2 62.1h1.5v1.5h-1.5zM23.7 62.1h1.5v1.5h-1.5zM26.6 62.1h1.5v1.5h-1.5zM42.9 62.1h1.5v1.5h-1.5zM59.1 62.1h4.4v1.5h-4.4zM65.0 62.1h1.5v1.5h-1.5zM11.8 63.6h1.5v1.5h-1.5zM20.7 63.6h10.3v1.5h-10.3zM53.2 63.6h1.5v1.5h-1.5zM59.1 63.6h1.5v1.5h-1.5zM62.1 63.6h3.0v1.5h-3.0zM11.8 65.0h1.5v1.5h-1.5zM20.7 65.0h1.5v1.5h-1.5zM23.7 65.0h8.9v1.5h-8.9zM34.0 65.0h1.5v1.5h-1.5zM37.0 65.0h1.5v1.5h-1.5zM41.4 65.0h3.0v1.5h-3.0zM47.3 65.0h1.5v1.5h-1.5zM51.7 65.0h10.3v1.5h-10.3zM63.6 65.0h1.5v1.5h-1.5zM16.3 66.5h3.0v1.5h-3.0zM20.7 66.5h1.5v1.5h-1.5zM25.1 66.5h11.8v1.5h-11.8zM38.4 66.5h4.4v1.5h-4.4zM44.3 66.5h1.5v1.5h-1.5zM48.8 66.5h10.3v1.5h-10.3z" fill="#151515" opacity="0.68"/></g><rect x="0.5" y="0.5" width="11" height="11" fill="#000"/><rect x="2.2" y="2.2" width="7.6" height="7.6" fill="#fff"/><rect x="4.0" y="4.0" width="4" height="4" fill="#000"/><rect x="56.5" y="0.5" width="11" height="11" fill="#000"/><rect x="58.2" y="2.2" width="7.6" height="7.6" fill="#fff"/><rect x="60.0" y="4.0" width="4" height="4" fill="#000"/><rect x="0.5" y="56.5" width="11" height="11" fill="#000"/><rect x="2.2" y="58.2" width="7.6" height="7.6" fill="#fff"/><rect x="4.0" y="60.0" width="4" height="4" fill="#000"/>
 <path d="M34.5 35 C31 28 26 23.5 24.5 25 C23 27 24.5 34 28.5 36 C24.5 38 26 44 30 43.5 C32.5 43 34 40 34.5 38 C35 40 36.5 43 39 43.5 C43 44 44.5 38 40.5 36 C44.5 34 46 27 44.5 25 C43 23.5 38 28 34.5 35Z" fill="url(#bfg)"/>
</svg>
<div class="a" style="left:708px;top:352px;width:9px;height:9px;background:linear-gradient(#fbb464,#ef7d2a);border:1px solid #d8641c"></div>
<div class="a" style="left:746px;top:352px;width:9px;height:9px;background:linear-gradient(#fbb464,#ef7d2a);border:1px solid #d8641c"></div>
<div class="a" style="left:783px;top:352px;width:9px;height:9px;background:linear-gradient(#fbb464,#ef7d2a);border:1px solid #d8641c"></div>
<div class="a" style="left:708px;top:389px;width:9px;height:9px;background:linear-gradient(#fbb464,#ef7d2a);border:1px solid #d8641c"></div>
<div class="a" style="left:783px;top:389px;width:9px;height:9px;background:linear-gradient(#fbb464,#ef7d2a);border:1px solid #d8641c"></div>
<div class="a" style="left:708px;top:427px;width:9px;height:9px;background:linear-gradient(#fbb464,#ef7d2a);border:1px solid #d8641c"></div>
<div class="a" style="left:746px;top:427px;width:9px;height:9px;background:linear-gradient(#fbb464,#ef7d2a);border:1px solid #d8641c"></div>
<div class="a" style="left:783px;top:427px;width:9px;height:9px;background:linear-gradient(#fbb464,#ef7d2a);border:1px solid #d8641c"></div>
<svg class="a" style="left:818px;top:354px" width="20" height="76" viewBox="0 0 20 76">
 <rect width="20" height="76" fill="#e4e4e4"/>
 <g opacity="0.8"><path d="M0 0h2v2h-2zM2 0h2v2h-2zM4 0h2v2h-2zM8 0h2v2h-2zM12 0h2v2h-2zM18 0h2v2h-2zM2 2h2v2h-2zM4 2h2v2h-2zM10 2h2v2h-2zM14 2h2v2h-2zM16 2h2v2h-2zM2 4h2v2h-2zM14 4h2v2h-2zM16 4h2v2h-2zM18 4h2v2h-2zM6 6h2v2h-2zM12 6h2v2h-2zM18 6h2v2h-2zM2 8h2v2h-2zM10 8h2v2h-2zM14 8h2v2h-2zM16 8h2v2h-2zM18 8h2v2h-2zM6 10h2v2h-2zM8 10h2v2h-2zM12 10h2v2h-2zM14 10h2v2h-2zM16 10h2v2h-2zM18 10h2v2h-2zM0 12h2v2h-2zM2 12h2v2h-2zM8 12h2v2h-2zM14 12h2v2h-2zM16 12h2v2h-2zM0 14h2v2h-2zM4 14h2v2h-2zM6 14h2v2h-2zM14 14h2v2h-2zM0 16h2v2h-2zM2 16h2v2h-2zM4 16h2v2h-2zM6 16h2v2h-2zM18 16h2v2h-2zM0 18h2v2h-2zM2 18h2v2h-2zM8 18h2v2h-2zM16 18h2v2h-2zM4 20h2v2h-2zM6 20h2v2h-2zM8 20h2v2h-2zM14 20h2v2h-2zM16 20h2v2h-2zM0 22h2v2h-2zM8 22h2v2h-2zM10 22h2v2h-2zM12 22h2v2h-2zM16 22h2v2h-2zM16 24h2v2h-2zM18 24h2v2h-2zM2 26h2v2h-2zM4 26h2v2h-2zM8 26h2v2h-2zM12 26h2v2h-2zM14 26h2v2h-2zM18 26h2v2h-2zM0 28h2v2h-2zM2 28h2v2h-2zM4 28h2v2h-2zM6 28h2v2h-2zM10 28h2v2h-2zM16 28h2v2h-2zM2 30h2v2h-2zM4 30h2v2h-2zM6 30h2v2h-2zM10 30h2v2h-2zM14 30h2v2h-2zM16 30h2v2h-2zM18 30h2v2h-2zM4 32h2v2h-2zM8 32h2v2h-2zM16 32h2v2h-2zM18 32h2v2h-2zM0 34h2v2h-2zM4 34h2v2h-2zM8 34h2v2h-2zM18 34h2v2h-2zM0 36h2v2h-2zM2 36h2v2h-2zM6 36h2v2h-2zM10 36h2v2h-2zM14 36h2v2h-2zM6 38h2v2h-2zM8 38h2v2h-2zM14 38h2v2h-2zM18 38h2v2h-2zM12 40h2v2h-2zM14 40h2v2h-2zM18 40h2v2h-2zM2 42h2v2h-2zM8 42h2v2h-2zM10 42h2v2h-2zM16 42h2v2h-2zM18 42h2v2h-2zM0 44h2v2h-2zM2 44h2v2h-2zM4 44h2v2h-2zM6 44h2v2h-2zM8 44h2v2h-2zM14 44h2v2h-2zM16 44h2v2h-2zM4 46h2v2h-2zM8 46h2v2h-2zM12 46h2v2h-2zM14 46h2v2h-2zM2 48h2v2h-2zM12 48h2v2h-2zM14 48h2v2h-2zM16 48h2v2h-2zM18 48h2v2h-2zM0 50h2v2h-2zM4 50h2v2h-2zM6 50h2v2h-2zM8 50h2v2h-2zM10 50h2v2h-2zM12 50h2v2h-2zM16 50h2v2h-2zM12 52h2v2h-2zM14 52h2v2h-2zM16 52h2v2h-2zM18 52h2v2h-2zM8 54h2v2h-2zM12 54h2v2h-2zM14 54h2v2h-2zM18 54h2v2h-2zM12 56h2v2h-2zM18 56h2v2h-2zM2 58h2v2h-2zM4 58h2v2h-2zM6 58h2v2h-2zM0 60h2v2h-2zM4 60h2v2h-2zM6 60h2v2h-2zM10 60h2v2h-2zM16 60h2v2h-2zM4 62h2v2h-2zM10 62h2v2h-2zM14 62h2v2h-2zM2 64h2v2h-2zM4 64h2v2h-2zM6 64h2v2h-2zM0 66h2v2h-2zM2 66h2v2h-2zM4 66h2v2h-2zM6 66h2v2h-2zM18 66h2v2h-2zM6 68h2v2h-2zM8 68h2v2h-2zM10 68h2v2h-2zM0 70h2v2h-2zM2 70h2v2h-2zM4 70h2v2h-2zM10 70h2v2h-2zM12 70h2v2h-2zM14 70h2v2h-2zM0 72h2v2h-2zM2 72h2v2h-2zM12 72h2v2h-2zM14 72h2v2h-2zM16 72h2v2h-2zM2 74h2v2h-2zM4 74h2v2h-2zM10 74h2v2h-2zM12 74h2v2h-2zM18 74h2v2h-2z" fill="#777"/></g>
 <rect x="0" y="0" width="12" height="12" fill="#000"/><rect x="1.8" y="1.8" width="8.4" height="8.4" fill="#fff"/><rect x="3.6" y="3.6" width="4.8" height="4.8" fill="#000"/>
 <rect x="0" y="64" width="12" height="12" fill="#000"/><rect x="1.8" y="65.8" width="8.4" height="8.4" fill="#fff"/><rect x="3.6" y="67.6" width="4.8" height="4.8" fill="#000"/>
</svg>

<!-- scrollbar + sidebar -->
<div class="a" style="left:1853px;top:151px;width:7px;height:626px;background:#878787"></div>
<div class="a" style="left:1863px;top:135px;width:1px;height:883px;background:#8c8c8c"></div>
<div class="a" style="left:1863px;top:540px;width:7px;height:73px;background:#a09d9b"></div>

<!-- status bar -->
<div class="a" style="left:0;top:1018px;width:1920px;height:28px;background:#404042;border-top:1px solid #69696b"></div>
<div class="st" style="left:41px">Page 1 of 1</div>
<div class="st" style="left:275px">10 words, 85 characters</div>
<div class="st" style="left:589px">Default Page Style</div>
<div class="st" style="left:1268px">2.88 / 1.06</div>
<div class="st" style="left:1470px">1.98 x 1.98</div>
<div class="st" style="left:1877px">100%</div>
<div class="sb" style="left:31px"></div>
<div class="sb" style="left:264px"></div>
<div class="sb" style="left:579px"></div>
<div class="sb" style="left:862px"></div>
<div class="sb" style="left:1108px"></div>
<div class="sb" style="left:1177px"></div>
<div class="sb" style="left:1207px"></div>
<div class="sb" style="left:1237px"></div>
<div class="sb" style="left:1647px"></div>
<div class="sb" style="left:1724px"></div>
<div class="sb" style="left:1868px"></div>

<!-- dialog -->
<div class="a" style="left:837px;top:277px;width:909px;height:741px;background:#434345;box-shadow:0 0 26px 4px rgba(0,0,0,0.38)"></div>
<div class="a" style="left:837px;top:277px;width:909px;height:26px;background:#77757f"></div>
<div class="t" style="left:1268px;top:283px;font-size:16px;color:#ececec">Image</div>
<!-- tab frame -->
<div class="a" style="left:845px;top:311px;width:893px;height:36px;background:#49494b"></div>
<div class="a" style="left:845px;top:347px;width:893px;height:610px;border:1px solid #68686a;border-top:2px solid #68686a"></div>
<div class="a" style="left:846px;top:349px;width:891px;height:37px;background:#49494b;border-bottom:1px solid #68686a"></div>
<div class="tab" style="left:924px;top:322px">Position and Size</div>
<div class="tab" style="left:1198px;top:322px">Options</div>
<div class="tab" style="left:1404px;top:322px">Wrap</div>
<div class="tab" style="left:1592px;top:322px">Hyperlink</div>
<div class="tab" style="left:897px;top:360px">Rotation</div>
<div class="tab" style="left:1049px;top:360px">Crop</div>
<div class="tab" style="left:1177px;top:360px">Borders</div>
<div class="tab" style="left:1325px;top:360px">Area</div>
<div class="tab" style="left:1452px;top:360px">Transparency</div>
<div class="tab" style="left:1641px;top:360px;color:#dcdcdc">Macro</div>
<div class="a" style="left:854px;top:383px;width:146px;height:2px;background:#68686a"></div>
<div class="a" style="left:1598px;top:383px;width:131px;height:2px;background:#7a7a7c"></div>

<div class="lbl" style="left:856px;top:395px">Assignments</div>
<!-- events list -->
<div class="a" style="left:864px;top:420px;width:745px;height:245px;background:#515151;border:1px solid #5d5d5f"></div>
<div class="a" style="left:865px;top:421px;width:743px;height:31px;background:#4f4f4f;border-bottom:1px solid #3f3f41"></div>
<div class="a" style="left:1179px;top:421px;width:1px;height:30px;background:#3f3f41"></div>
<div class="t" style="left:871px;top:429px;font-size:16px;color:#8d8d8d">Event</div>
<div class="t" style="left:1186px;top:429px;font-size:16px;color:#8d8d8d">Assigned Action</div>
<div class="a" style="left:865px;top:452px;width:743px;height:28px;background:#77757f"></div>
<div class="row" style="top:459px;color:#f2f2f2">Could not load image</div>
<div class="row" style="top:487px">Image loading terminated</div>
<div class="row" style="top:515px">Image loaded successfully</div>
<div class="row" style="top:543px">Click object</div>
<div class="row" style="top:571px">Mouse over object</div>
<div class="row" style="top:599px">Trigger hyperlink</div>
<div class="row" style="top:627px">Mouse leaves object</div>

<div class="btn" style="left:1626px;top:397px;width:100px;height:32px;background:#4c4c4e;border-color:#5a5a5c;color:#8a8a8a">Assign</div>
<div class="btn" style="left:1626px;top:435px;width:100px;height:32px">Remove</div>

<div class="lbl" style="left:856px;top:680px">Macro From</div>
<div class="lbl" style="left:1238px;top:680px">Existing Macros</div>
<div class="a" style="left:864px;top:705px;width:364px;height:245px;background:#515151;border:1px solid #5d5d5f"></div>
<div class="a" style="left:865px;top:706px;width:362px;height:28px;background:#77757f"></div>
<div class="a" style="left:1246px;top:705px;width:363px;height:245px;background:#515151;border:1px solid #5d5d5f"></div>
<div class="t" style="left:909px;top:713px;font-size:16px;color:#dcdcdc">My Macros</div>
<div class="t" style="left:927px;top:741px;font-size:16px;color:#d6d6d6">Standard</div>
<div class="t" style="left:927px;top:769px;font-size:16px;color:#d6d6d6">WikiEditor</div>
<div class="t" style="left:909px;top:797px;font-size:16px;color:#d6d6d6">Application Macros</div>
<div class="t" style="left:909px;top:825px;font-size:16px;color:#d6d6d6">Curriculum_vitae_name_tbl_ajl.odt</div>

<div class="btn" style="left:850px;top:974px;width:90px;height:32px">Help</div>
<div class="btn" style="left:1455px;top:974px;width:90px;height:32px">Reset</div>
<div class="btn" style="left:1549px;top:974px;width:90px;height:32px">Cancel</div>
<div class="btn" style="left:1643px;top:974px;width:90px;height:32px">OK</div>

<!-- misc --><svg class="a" style="left:0;top:0" width="1920" height="1046"><path d="M1851.5 11.5 L1855 15 L1858.5 11.5" stroke="#7c7c7c" stroke-width="2" fill="none"/><rect x="1878" y="10" width="6" height="6" stroke="#7c7c7c" stroke-width="2" fill="none"/><path d="M1903.5 9.5 L1910.5 16.5 M1910.5 9.5 L1903.5 16.5" stroke="#7c7c7c" stroke-width="2"/><rect x="543.1" y="145" width="1" height="3" fill="#8a8a8a"/><rect x="580.9" y="145" width="1" height="3" fill="#8a8a8a"/><rect x="618.7" y="145" width="1" height="3" fill="#8a8a8a"/><rect x="656.5" y="145" width="1" height="3" fill="#8a8a8a"/><rect x="694.3" y="145" width="1" height="3" fill="#8a8a8a"/><rect x="732.1" y="145" width="1" height="3" fill="#8a8a8a"/><rect x="769.9" y="145" width="1" height="3" fill="#8a8a8a"/><rect x="807.7" y="145" width="1" height="3" fill="#8a8a8a"/><rect x="845.5" y="145" width="1" height="3" fill="#8a8a8a"/><rect x="883.3" y="145" width="1" height="3" fill="#8a8a8a"/><rect x="921.1" y="145" width="1" height="3" fill="#8a8a8a"/><rect x="958.9" y="145" width="1" height="3" fill="#8a8a8a"/><rect x="996.7" y="145" width="1" height="3" fill="#8a8a8a"/><rect x="1034.5" y="145" width="1" height="3" fill="#8a8a8a"/><rect x="1072.3" y="145" width="1" height="3" fill="#8a8a8a"/><rect x="1110.1" y="145" width="1" height="3" fill="#8a8a8a"/><rect x="1147.9" y="145" width="1" height="3" fill="#8a8a8a"/><rect x="1185.7" y="145" width="1" height="3" fill="#8a8a8a"/><rect x="1223.5" y="145" width="1" height="3" fill="#8a8a8a"/><rect x="1261.3" y="145" width="1" height="3" fill="#8a8a8a"/><rect x="1299.1" y="145" width="1" height="3" fill="#8a8a8a"/><text x="675.4" y="150" font-family="Liberation Sans" font-size="10" fill="#8c8c8c" text-anchor="middle">1</text><rect x="675.4" y="153" width="1" height="2" fill="#8a8a8a"/><text x="637.6" y="150" font-family="Liberation Sans" font-size="10" fill="#8c8c8c" text-anchor="middle">2</text><rect x="637.6" y="153" width="1" height="2" fill="#8a8a8a"/><text x="599.8" y="150" font-family="Liberation Sans" font-size="10" fill="#8c8c8c" text-anchor="middle">3</text><rect x="599.8" y="153" width="1" height="2" fill="#8a8a8a"/><text x="562.0" y="150" font-family="Liberation Sans" font-size="10" fill="#8c8c8c" text-anchor="middle">4</text><rect x="562.0" y="153" width="1" height="2" fill="#8a8a8a"/><text x="751.0" y="150" font-family="Liberation Sans" font-size="10" fill="#8c8c8c" text-anchor="middle">1</text><rect x="751.0" y="153" width="1" height="2" fill="#8a8a8a"/><text x="788.8" y="150" font-family="Liberation Sans" font-size="10" fill="#8c8c8c" text-anchor="middle">2</text><rect x="788.8" y="153" width="1" height="2" fill="#8a8a8a"/><text x="826.6" y="150" font-family="Liberation Sans" font-size="10" fill="#8c8c8c" text-anchor="middle">3</text><rect x="826.6" y="153" width="1" height="2" fill="#8a8a8a"/><text x="864.4" y="150" font-family="Liberation Sans" font-size="10" fill="#8c8c8c" text-anchor="middle">4</text><rect x="864.4" y="153" width="1" height="2" fill="#8a8a8a"/><text x="902.2" y="150" font-family="Liberation Sans" font-size="10" fill="#8c8c8c" text-anchor="middle">5</text><rect x="902.2" y="153" width="1" height="2" fill="#8a8a8a"/><text x="940.0" y="150" font-family="Liberation Sans" font-size="10" fill="#8c8c8c" text-anchor="middle">6</text><rect x="940.0" y="153" width="1" height="2" fill="#8a8a8a"/><text x="977.8" y="150" font-family="Liberation Sans" font-size="10" fill="#8c8c8c" text-anchor="middle">7</text><rect x="977.8" y="153" width="1" height="2" fill="#8a8a8a"/><text x="1015.6" y="150" font-family="Liberation Sans" font-size="10" fill="#8c8c8c" text-anchor="middle">8</text><rect x="1015.6" y="153" width="1" height="2" fill="#8a8a8a"/><text x="1053.4" y="150" font-family="Liberation Sans" font-size="10" fill="#8c8c8c" text-anchor="middle">9</text><rect x="1053.4" y="153" width="1" height="2" fill="#8a8a8a"/><text x="1091.2" y="150" font-family="Liberation Sans" font-size="10" fill="#8c8c8c" text-anchor="middle">10</text><rect x="1091.2" y="153" width="1" height="2" fill="#8a8a8a"/><text x="1129.0" y="150" font-family="Liberation Sans" font-size="10" fill="#8c8c8c" text-anchor="middle">11</text><rect x="1129.0" y="153" width="1" height="2" fill="#8a8a8a"/><text x="1166.8" y="150" font-family="Liberation Sans" font-size="10" fill="#8c8c8c" text-anchor="middle">12</text><rect x="1166.8" y="153" width="1" height="2" fill="#8a8a8a"/><text x="1204.6" y="150" font-family="Liberation Sans" font-size="10" fill="#8c8c8c" text-anchor="middle">13</text><rect x="1204.6" y="153" width="1" height="2" fill="#8a8a8a"/><text x="1242.4" y="150" font-family="Liberation Sans" font-size="10" fill="#8c8c8c" text-anchor="middle">14</text><rect x="1242.4" y="153" width="1" height="2" fill="#8a8a8a"/><text x="1280.2" y="150" font-family="Liberation Sans" font-size="10" fill="#8c8c8c" text-anchor="middle">15</text><rect x="1280.2" y="153" width="1" height="2" fill="#8a8a8a"/><path d="M751 139v16" stroke="#8a8a8a" stroke-width="1" stroke-dasharray="1 2"/><path d="M1886 147h14M1886 152h14M1886 157h14" stroke="#a8a29e" stroke-width="2"/><rect x="1877.5" y="174.5" width="31" height="32" rx="2" fill="none" stroke="#4e4e50" stroke-width="1"/><rect x="1884" y="182" width="18" height="18" fill="#ececec"/><rect x="1886" y="188" width="14" height="7" rx="3.5" fill="#3a8ae8"/><circle cx="1896.5" cy="191.5" r="3" fill="#f4f4f4" stroke="#6a8ab0" stroke-width="0.6"/><path d="M1883 243 L1889 223 L1895 243 M1885.5 236 H1892.5" stroke="#2e2e2e" stroke-width="1.8" fill="none"/><path d="M1896 238 L1904 227" stroke="#c87a30" stroke-width="2"/><path d="M1890 244 L1896.5 237 L1898 239 Z" fill="#e060c0"/><path d="M1884 268 L1898 265.5 L1899 270 L1885 272Z" fill="#4aa0e8"/><rect x="1883" y="269" width="20.5" height="15" fill="#f8f8f8" stroke="#555" stroke-width="0.4"/><rect x="1884.5" y="270.5" width="17.5" height="12" fill="#50a8f0"/><path d="M1884.5 277 C1890 275 1896 278 1902 276 V282.5 H1884.5Z" fill="#e8b050"/><circle cx="1888" cy="279.5" r="1" fill="#e83020"/><circle cx="1893" cy="317" r="10" fill="#5a6070"/><circle cx="1893" cy="317" r="8.3" fill="#2e3a5e" stroke="#c8c8c8" stroke-width="1.2"/><path d="M1897 309 L1894.5 318 L1889 325 L1891.5 316Z" fill="#d83030"/><path d="M1897 309 L1891.5 316 L1894.5 318Z" fill="#f0f0f0"/><rect x="1885" y="349" width="16" height="20.5" fill="#ececec"/><ellipse cx="1891" cy="399" rx="6.5" ry="4.2" fill="#f4f4f4" stroke="#333" stroke-width="0.8"/><circle cx="1891" cy="399" r="3" fill="#3a7ae0"/><circle cx="1891" cy="399" r="1.2" fill="#1a2a60"/><path d="M1884 394 C1888 391 1895 391 1898 394" stroke="#333" stroke-width="0.9" fill="none"/><path d="M1896 405 L1904 395" stroke="#c87a30" stroke-width="2"/><path d="M1890 412 L1896.5 404 L1898 406 Z" fill="#e060c0"/><path d="M1865 573v6l3-3z" fill="#555"/><path d="M1677.5 288.5 L1681 292 L1684.5 288.5" stroke="#fff" stroke-width="2" fill="none"/><path d="M1703.5 292.5 L1707 289 L1710.5 292.5" stroke="#fff" stroke-width="2" fill="none"/><path d="M1729.5 286.5 L1736.5 293.5 M1736.5 286.5 L1729.5 293.5" stroke="#fff" stroke-width="2"/><path d="M869 717h11.5l-5.75 5.75z" fill="#f0f0f0"/><rect x="885" y="712.5" width="16" height="15" rx="1.5" fill="#e2e2e2" stroke="#9a9a9a" stroke-width="0.5"/><ellipse cx="893" cy="718.5" rx="5" ry="3.5" fill="none" stroke="#c4c4c4" stroke-width="0.8"/><rect x="885" y="723.5" width="16" height="4" rx="1" fill="#2a2a2a"/><rect x="886" y="724.0" width="14" height="1.2" fill="#5a5a5a"/><path d="M874.5 734v42.5M874.5 748h7M874.5 776h7" stroke="#9a9a9a" stroke-width="1" fill="none"/><path d="M890 742v12l6-6z" fill="#9a9a9a"/><path d="M890 770v12l6-6z" fill="#9a9a9a"/><path d="M903 742h5.5l1.2 1.5h8.8v12.5h-15.5z" fill="#e2c088" stroke="#a88040" stroke-width="0.5"/><rect x="904.2" y="743.5" width="13" height="3" fill="#fafafa"/><rect x="903" y="746" width="15.5" height="9.5" fill="#eccc94"/><rect x="909" y="747" width="9.5" height="9" fill="#5a7090" stroke="#34445c" stroke-width="0.6"/><circle cx="913.75" cy="751.5" r="2.3" fill="none" stroke="#8aa0c0" stroke-width="0.8"/><path d="M903 770h5.5l1.2 1.5h8.8v12.5h-15.5z" fill="#e2c088" stroke="#a88040" stroke-width="0.5"/><rect x="904.2" y="771.5" width="13" height="3" fill="#fafafa"/><rect x="903" y="774" width="15.5" height="9.5" fill="#eccc94"/><rect x="909" y="775" width="9.5" height="9" fill="#5a7090" stroke="#34445c" stroke-width="0.6"/><circle cx="913.75" cy="779.5" r="2.3" fill="none" stroke="#8aa0c0" stroke-width="0.8"/><path d="M872 798v12l6-6z" fill="#9a9a9a"/><path d="M872 826v12l6-6z" fill="#9a9a9a"/><rect x="885" y="796.5" width="16" height="15" rx="1.5" fill="#e2e2e2" stroke="#9a9a9a" stroke-width="0.5"/><ellipse cx="893" cy="802.5" rx="5" ry="3.5" fill="none" stroke="#c4c4c4" stroke-width="0.8"/><rect x="885" y="807.5" width="16" height="4" rx="1" fill="#2a2a2a"/><rect x="886" y="808.0" width="14" height="1.2" fill="#5a5a5a"/><rect x="887" y="824" width="12" height="15.5" fill="#1f58c8"/><rect x="889" y="826" width="8" height="11.5" fill="#fff"/><path d="M890 829h4M890 831.5h6M890 834h6" stroke="#aab" stroke-width="0.9"/><path d="M15 1024.5h5l2 2v6h-7z" fill="#f0f0f0" stroke="#222" stroke-width="0.6"/><path d="M1186 1027h4M1188 1027v9M1186 1036h4M1192 1036h6v-2" stroke="#9a9a9a" stroke-width="1" fill="none"/><path d="M1248 1024h6M1251 1021v6" stroke="#e07828" stroke-width="1.2"/><rect x="1252" y="1026" width="9" height="6" fill="none" stroke="#777" stroke-width="0.6" stroke-dasharray="1 1"/><path d="M1455 1026v6M1452.5 1026h5M1452.5 1032h5" stroke="#e07828" stroke-width="1"/><path d="M1458 1023v4M1466 1023v4M1458 1025h8" stroke="#e07828" stroke-width="1"/><rect x="1458" y="1027" width="8" height="5" fill="none" stroke="#777" stroke-width="0.6" stroke-dasharray="1 1"/><path d="M1660.5 1027h6v5l-3 3h-3z" fill="#f4f4f4" stroke="#c83818" stroke-width="1"/><path d="M1675 1027.5h6v4.5l-2.5 2.5h-3.5z" fill="#f0f0f0" stroke="#333" stroke-width="0.5"/><path d="M1684 1027.5h6v4.5l-2.5 2.5h-3.5z" fill="#f0f0f0" stroke="#333" stroke-width="0.5"/><path d="M1699 1027.5h6v4.5l-2.5 2.5h-3.5z" fill="#f0f0f0" stroke="#333" stroke-width="0.5"/><path d="M1708 1027.5h6v4.5l-2.5 2.5h-3.5z" fill="#f0f0f0" stroke="#333" stroke-width="0.5"/><circle cx="1738.5" cy="1032" r="5" fill="#dcdcdc"/><path d="M1735.5 1032h6" stroke="#555" stroke-width="1.4"/><rect x="1749" y="1031.3" width="98" height="1.6" fill="#9a9a9a"/><rect x="1780" y="1029" width="1.5" height="6" fill="#9a9a9a"/><circle cx="1797" cy="1032" r="4.2" fill="#d8d8d8"/><circle cx="1857.3" cy="1032" r="5" fill="#f0f0f0"/><path d="M1854 1032h6.6M1857.3 1028.7v6.6" stroke="#444" stroke-width="1.4"/></svg><!-- /misc -->
<!-- annotations -->
<svg class="a" style="left:0;top:0" width="1920" height="1046"><line x1="824.7" y1="249.2" x2="948.9" y2="311.1" stroke="#ff0000" stroke-width="4"/><polygon points="966.8,320.0 941.3,317.4 949.3,301.2" fill="#ff0000"/><line x1="1554.7" y1="313.1" x2="1615.8" y2="350.3" stroke="#ff0000" stroke-width="4"/><polygon points="1632.9,360.7 1607.7,355.9 1617.1,340.5" fill="#ff0000"/><circle cx="808" cy="233.7" r="20.2" fill="#f0f0f0"/><circle cx="808" cy="233.7" r="19.3" fill="#1a1a1a"/><circle cx="808" cy="233.7" r="18.3" fill="#fff"/><circle cx="808" cy="233.7" r="17.6" fill="#ff0000"/><text x="808" y="240.2" text-anchor="middle" font-family="Liberation Sans" font-weight="bold" font-size="18" fill="#fff">2</text><circle cx="1538.6" cy="298.6" r="20.2" fill="#f0f0f0"/><circle cx="1538.6" cy="298.6" r="19.3" fill="#1a1a1a"/><circle cx="1538.6" cy="298.6" r="18.3" fill="#fff"/><circle cx="1538.6" cy="298.6" r="17.6" fill="#ff0000"/><text x="1538.6" y="305.1" text-anchor="middle" font-family="Liberation Sans" font-weight="bold" font-size="18" fill="#fff">1</text></svg>
</div></body></html>
